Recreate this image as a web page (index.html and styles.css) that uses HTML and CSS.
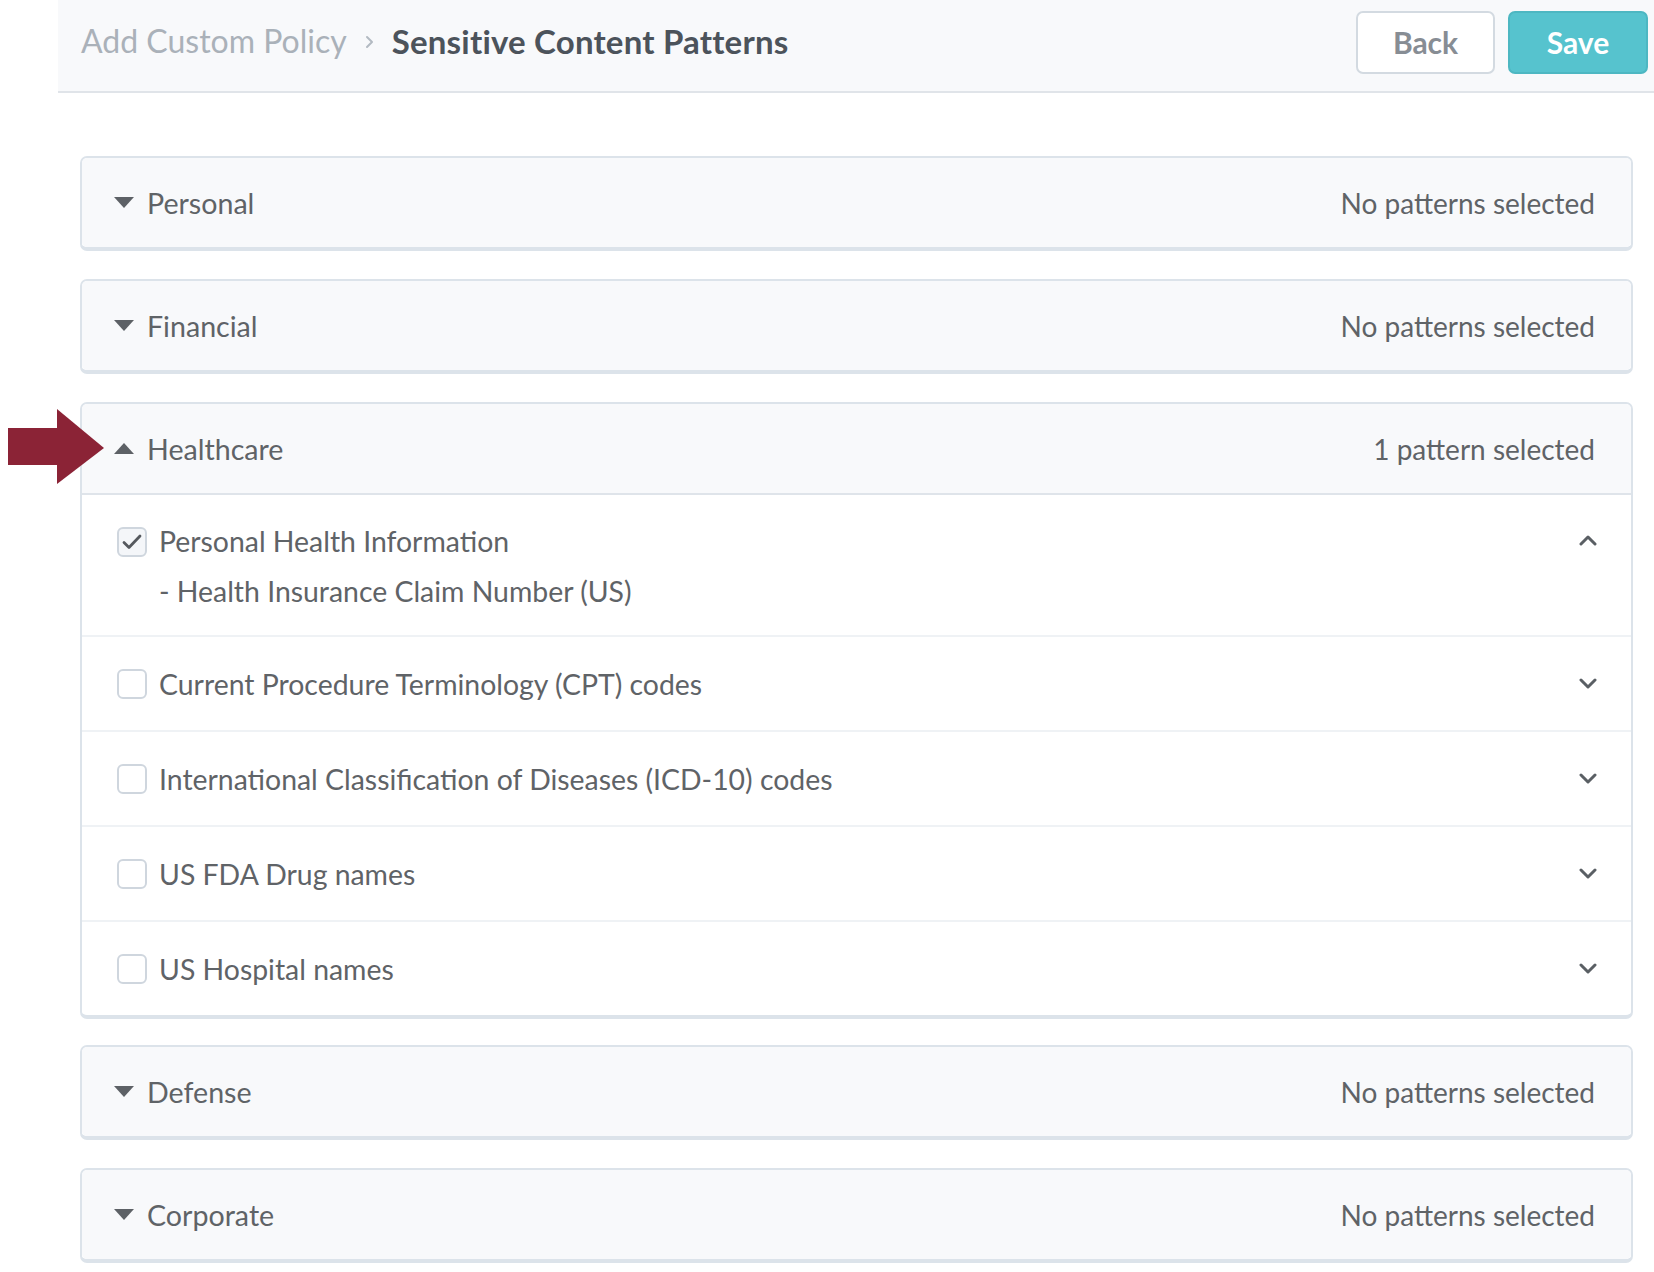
FILE: index.html
```html
<!DOCTYPE html>
<html lang="en">
<head>
<meta charset="utf-8">
<title>Sensitive Content Patterns</title>
<link rel="stylesheet" href="styles.css">
</head>
<body>
<header class="topbar">
  <nav class="crumbs">
    <span class="crumb-parent">Add Custom Policy</span>
    <svg class="crumb-sep" width="9" height="14" viewBox="0 0 9 14"><polyline points="2,2 7,7 2,12" fill="none" stroke="#b3bac2" stroke-width="2" stroke-linecap="round" stroke-linejoin="round"/></svg>
    <span class="crumb-current">Sensitive Content Patterns</span>
  </nav>
  <div class="actions">
    <button class="btn btn-back">Back</button>
    <button class="btn btn-save">Save</button>
  </div>
</header>

<main class="content">
  <section class="group">
    <div class="group-head">
      <svg class="caret" width="20" height="11" viewBox="0 0 20 11"><polygon points="0,0 20,0 10,11" fill="#5d6166"/></svg>
      <span class="group-title">Personal</span>
      <span class="group-status">No patterns selected</span>
    </div>
  </section>

  <section class="group">
    <div class="group-head">
      <svg class="caret" width="20" height="11" viewBox="0 0 20 11"><polygon points="0,0 20,0 10,11" fill="#5d6166"/></svg>
      <span class="group-title">Financial</span>
      <span class="group-status">No patterns selected</span>
    </div>
  </section>

  <section class="group group-open">
    <svg class="pointer-arrow" width="96" height="75" viewBox="0 0 96 75"><rect x="0" y="19" width="51" height="37" fill="#8b2336"/><polygon points="49,0 96,39 49,75" fill="#8b2336"/></svg>
    <div class="group-head">
      <svg class="caret" width="20" height="11" viewBox="0 0 20 11"><polygon points="0,11 20,11 10,0" fill="#5d6166"/></svg>
      <span class="group-title">Healthcare</span>
      <span class="group-status">1 pattern selected</span>
    </div>
    <div class="pattern pattern-expanded">
      <span class="check checked"><svg width="20" height="16" viewBox="0 0 20 16"><polyline points="2,8.5 7,13.5 18,2" fill="none" stroke="#55595e" stroke-width="2.8" stroke-linecap="round" stroke-linejoin="round"/></svg></span>
      <div class="pattern-text">
        <div class="pattern-name">Personal Health Information</div>
        <div class="pattern-sub">- Health Insurance Claim Number (US)</div>
      </div>
      <svg class="chev" width="18" height="11" viewBox="0 0 18 11"><polyline points="2,9 9,2 16,9" fill="none" stroke="#5a5f64" stroke-width="3" stroke-linecap="round" stroke-linejoin="round"/></svg>
    </div>
    <div class="pattern">
      <span class="check"></span>
      <div class="pattern-text"><div class="pattern-name">Current Procedure Terminology (CPT) codes</div></div>
      <svg class="chev" width="18" height="11" viewBox="0 0 18 11"><polyline points="2,2 9,9 16,2" fill="none" stroke="#5a5f64" stroke-width="3" stroke-linecap="round" stroke-linejoin="round"/></svg>
    </div>
    <div class="pattern">
      <span class="check"></span>
      <div class="pattern-text"><div class="pattern-name">International Classification of Diseases (ICD-10) codes</div></div>
      <svg class="chev" width="18" height="11" viewBox="0 0 18 11"><polyline points="2,2 9,9 16,2" fill="none" stroke="#5a5f64" stroke-width="3" stroke-linecap="round" stroke-linejoin="round"/></svg>
    </div>
    <div class="pattern">
      <span class="check"></span>
      <div class="pattern-text"><div class="pattern-name">US FDA Drug names</div></div>
      <svg class="chev" width="18" height="11" viewBox="0 0 18 11"><polyline points="2,2 9,9 16,2" fill="none" stroke="#5a5f64" stroke-width="3" stroke-linecap="round" stroke-linejoin="round"/></svg>
    </div>
    <div class="pattern pattern-last">
      <span class="check"></span>
      <div class="pattern-text"><div class="pattern-name">US Hospital names</div></div>
      <svg class="chev" width="18" height="11" viewBox="0 0 18 11"><polyline points="2,2 9,9 16,2" fill="none" stroke="#5a5f64" stroke-width="3" stroke-linecap="round" stroke-linejoin="round"/></svg>
    </div>
  </section>

  <section class="group">
    <div class="group-head">
      <svg class="caret" width="20" height="11" viewBox="0 0 20 11"><polygon points="0,0 20,0 10,11" fill="#5d6166"/></svg>
      <span class="group-title">Defense</span>
      <span class="group-status">No patterns selected</span>
    </div>
  </section>

  <section class="group">
    <div class="group-head">
      <svg class="caret" width="20" height="11" viewBox="0 0 20 11"><polygon points="0,0 20,0 10,11" fill="#5d6166"/></svg>
      <span class="group-title">Corporate</span>
      <span class="group-status">No patterns selected</span>
    </div>
  </section>
</main>
</body>
</html>
```

FILE: styles.css
```css
* { box-sizing: border-box; }

html, body {
  margin: 0;
  padding: 0;
  background: #ffffff;
  font-family: Lato, "Open Sans", "Liberation Sans", sans-serif;
  color: #5f6367;
}

.topbar {
  margin-left: 58px;
  height: 93px;
  padding: 0 6px 10px 23px;
  background: #f8f9fb;
  border-bottom: 2px solid #e0e4e9;
  display: flex;
  align-items: center;
  justify-content: space-between;
}

.crumbs {
  display: flex;
  align-items: center;
  gap: 18px;
  font-size: 32px;
  line-height: 40px;
}

.crumb-parent { color: #aab1b9; }

.crumb-sep { margin-top: 2px; }

.crumb-current {
  color: #4c535b;
  font-weight: 700;
  font-size: 33px;
  letter-spacing: 0.2px;
}

.actions {
  display: flex;
  gap: 13px;
  padding-top: 3px;
}

.btn {
  height: 63px;
  width: 139px;
  border-radius: 7px;
  font-family: inherit;
  font-size: 30px;
  font-weight: 700;
  cursor: pointer;
}

.btn-back {
  background: #ffffff;
  border: 2px solid #d3dae1;
  color: #878d94;
}

.btn-save {
  width: 140px;
  background: #56c3ce;
  border: 2px solid #4db7c2;
  color: #ffffff;
}

.content {
  padding: 63px 21px 0 80px;
  display: flex;
  flex-direction: column;
  gap: 28px;
}

.group {
  position: relative;
  border: 2px solid #dce3ea;
  border-bottom-width: 4px;
  border-radius: 7px;
  background: #ffffff;
}

.group-open {
  margin-bottom: -2px;
}

.group-head {
  height: 89px;
  display: flex;
  align-items: center;
  padding: 0 36px 0 32px;
  background: #f8f9fb;
  border-radius: 5px;
  font-size: 28px;
}

.group-title { font-size: 28.6px; }

.group-open .group-head {
  border-bottom: 2px solid #dfe4ea;
  border-radius: 5px 5px 0 0;
  height: 91px;
}

.caret { flex: none; margin-right: 13px; }

.group-title { flex: 1; }

.group-status { color: #5f6367; }

.pointer-arrow {
  position: absolute;
  left: -74px;
  top: 5px;
}

.pattern {
  display: flex;
  align-items: center;
  height: 95px;
  padding: 0 34px 0 35px;
  border-bottom: 2px solid #eff2f5;
  font-size: 28.4px;
}

.pattern-expanded {
  height: 142px;
  align-items: flex-start;
  padding-top: 21px;
}

.pattern-last {
  border-bottom: none;
  height: 93px;
}

.check {
  flex: none;
  width: 30px;
  height: 30px;
  border: 2px solid #cfd6de;
  border-radius: 6px;
  background: #ffffff;
  margin-right: 12px;
  display: flex;
  align-items: center;
  justify-content: center;
}

.pattern-expanded .check { margin-top: 11px; }

.check.checked { background: #f4f6f9; }

.pattern-text { flex: 1; }

.pattern-name,
.pattern-sub {
  line-height: 50px;
  color: #5f6367;
}

.chev { flex: none; }

.pattern-expanded .chev { margin-top: 19px; }
```
